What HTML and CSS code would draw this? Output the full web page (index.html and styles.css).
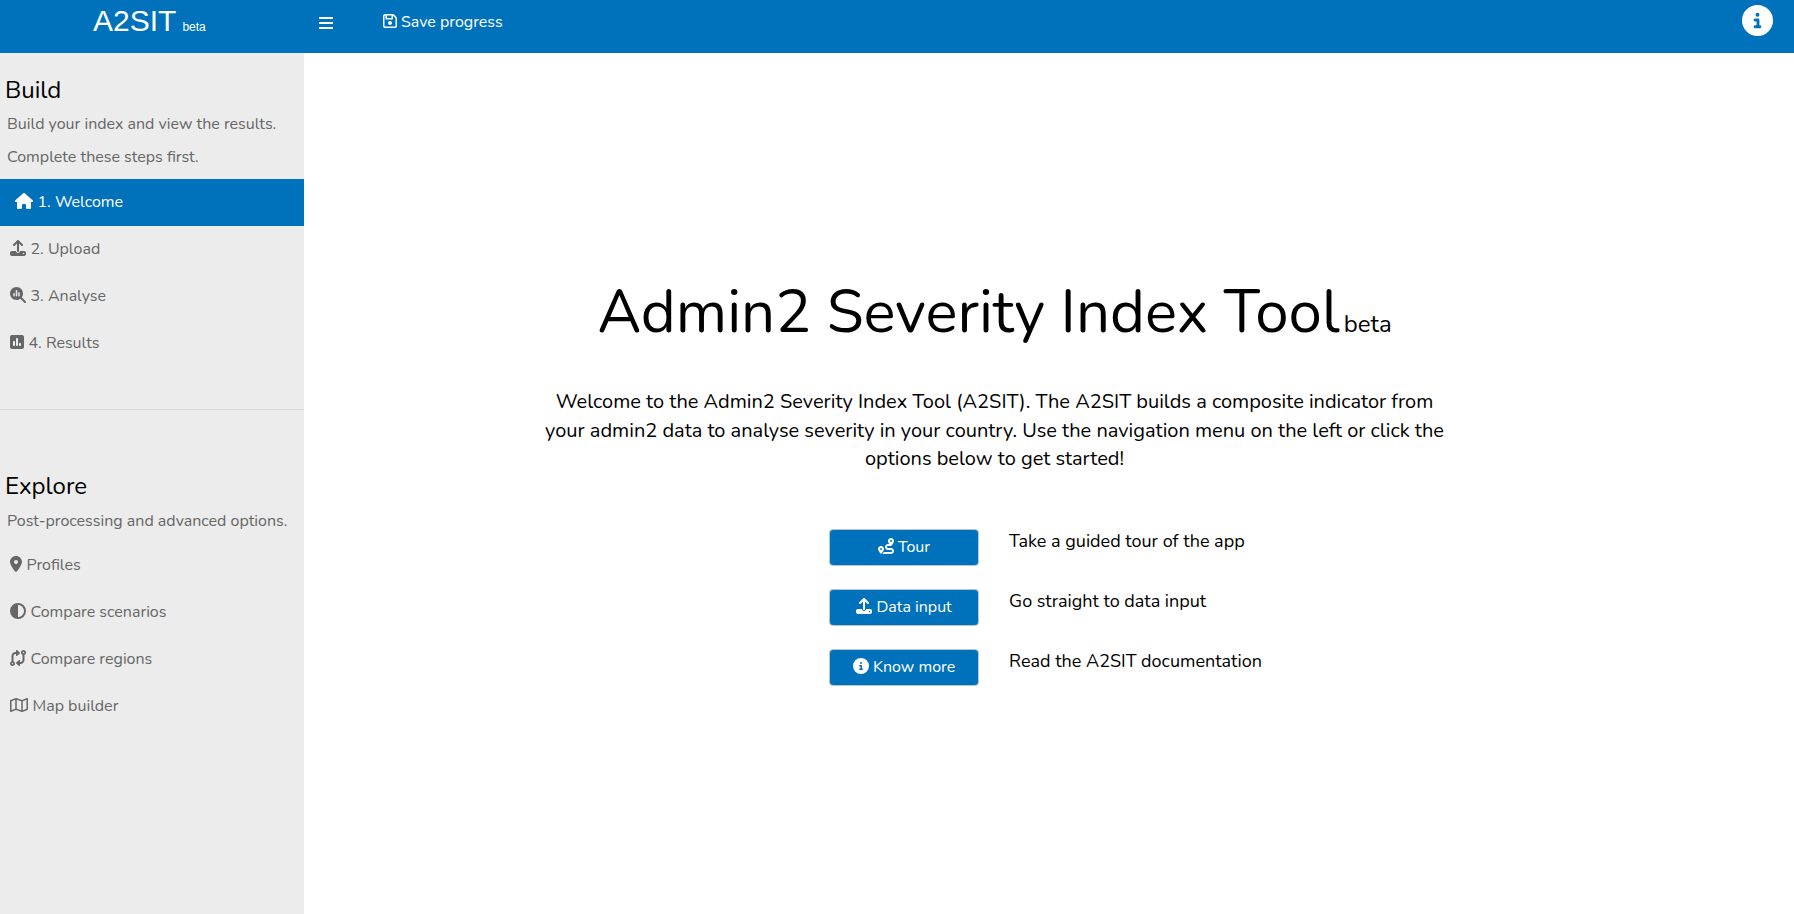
FILE: index.html
```html
<!DOCTYPE html>
<html lang="en">
<head>
<meta charset="utf-8">
<title>A2SIT</title>
<link rel="stylesheet" href="styles.css">
</head>
<body>
<header class="topbar">
  <div class="logo"><span class="logo-name">A2SIT</span><span class="logo-beta">beta</span></div>
  <svg class="bars" viewBox="0 0 14 12"><path d="M0 0h14v2H0zM0 5h14v2H0zM0 10h14v2H0z"/></svg>
  <div class="save"><svg class="icon w14" viewBox="0 0 448 512"><path fill-rule="evenodd" d="M48 96V416c0 8.800 7.200 16 16 16H384c8.800 0 16-7.200 16-16V170.500c0-4.200-1.700-8.300-4.700-11.300l33.900-33.900c12 12 18.700 28.300 18.700 45.300V416c0 35.300-28.700 64-64 64H64c-35.300 0-64-28.700-64-64V96C0 60.700 28.700 32 64 32H309.500c17 0 33.300 6.700 45.300 18.700l74.500 74.500-33.900 33.900L320.800 84.700c-.3-.3-.5-.5-.8-.8V184c0 13.300-10.700 24-24 24H104c-13.300 0-24-10.700-24-24V80H64c-8.800 0-16 7.200-16 16zm80-16v80H272V80H128zm32 240a64 64 0 1 1 128 0 64 64 0 1 1 -128 0z"/></svg><span class="save-text">Save progress</span></div>
  <svg class="help" viewBox="0 0 512 512"><use href="#info"/></svg>
</header>
<div class="body">
<nav class="sidebar">
  <h2 class="group">Build</h2>
  <p class="note">Build your index and view the results.</p>
  <p class="note">Complete these steps first.</p>
  <ul class="menu">
    <li class="item active"><svg class="icon w18" viewBox="0 0 576 512"><path d="M575.800 255.500c0 18-15 32.100-32 32.100h-32l.7 160.200c0 2.700-.2 5.400-.5 8.100V472c0 22.100-17.900 40-40 40H392c-22.100 0-40-17.900-40-40V384c0-17.700-14.300-32-32-32H256c-17.700 0-32 14.300-32 32v88c0 22.100-17.900 40-40 40H104c-22.100 0-40-17.900-40-40V287.600H32c-18 0-32-14-32-32.100c0-9 3-17 10-24L266.400 8c7-7 15-8 22-8s15 2 21 7L564.800 231.500c8 7 12 15 11 24z"/></svg><span>1. Welcome</span></li>
    <li class="item"><svg class="icon w16" viewBox="0 0 512 512"><use href="#upload"/></svg><span>2. Upload</span></li>
    <li class="item"><svg class="icon w16" viewBox="0 0 512 512"><path d="M416 208c0 45.900-14.900 88.300-40 122.700L502.600 457.400c12.500 12.500 12.500 32.800 0 45.300s-32.800 12.500-45.300 0L330.700 376c-34.400 25.200-76.800 40-122.700 40C93.100 416 0 322.900 0 208S93.100 0 208 0S416 93.100 416 208zm-312 8v64c0 13.300 10.700 24 24 24s24-10.700 24-24V216c0-13.300-10.700-24-24-24s-24 10.700-24 24zm80-96V280c0 13.300 10.700 24 24 24s24-10.700 24-24V120c0-13.300-10.700-24-24-24s-24 10.700-24 24zm80 64v96c0 13.300 10.700 24 24 24s24-10.700 24-24V184c0-13.300-10.700-24-24-24s-24 10.700-24 24z"/></svg><span>3. Analyse</span></li>
    <li class="item"><svg class="icon w14" viewBox="0 0 448 512"><path fill-rule="evenodd" d="M64 32C28.700 32 0 60.700 0 96V416c0 35.300 28.700 64 64 64H384c35.300 0 64-28.700 64-64V96c0-35.300-28.700-64-64-64H64zM128 224c17.700 0 32 14.300 32 32V352c0 17.700-14.300 32-32 32s-32-14.300-32-32V256c0-17.700 14.300-32 32-32zm64-64c0-17.700 14.300-32 32-32s32 14.300 32 32V352c0 17.700-14.300 32-32 32s-32-14.300-32-32V160zM320 288c17.700 0 32 14.300 32 32v32c0 17.700-14.300 32-32 32s-32-14.300-32-32V320c0-17.700 14.300-32 32-32z"/></svg><span>4. Results</span></li>
  </ul>
  <hr class="rule">
  <h2 class="group">Explore</h2>
  <p class="note note-post">Post-processing and advanced options.</p>
  <ul class="menu">
    <li class="item"><svg class="icon w12" viewBox="0 0 384 512"><path fill-rule="evenodd" d="M215.700 499.200C267 435 384 279.400 384 192C384 86 298 0 192 0S0 86 0 192c0 87.400 117 243 168.300 307.200c12.300 15.300 35.100 15.300 47.400 0zM192 128a64 64 0 1 1 0 128 64 64 0 1 1 0-128z"/></svg><span>Profiles</span></li>
    <li class="item"><svg class="icon w16" viewBox="0 0 512 512"><path fill-rule="evenodd" d="M448 256c0-106-86-192-192-192V448c106 0 192-86 192-192zM0 256a256 256 0 1 1 512 0A256 256 0 1 1 0 256z"/></svg><span>Compare scenarios</span></li>
    <li class="item"><svg class="icon w16" viewBox="0 0 512 512"><path fill-rule="evenodd" d="M320 488c0 9.500-5.600 18.100-14.200 21.900s-18.800 2.300-25.800-4.100l-80-72c-5.100-4.600-7.900-11-7.900-17.800s2.900-13.300 7.900-17.800l80-72c7-6.300 17.200-7.900 25.800-4.100s14.200 12.400 14.200 21.900v40h16c35.300 0 64-28.700 64-64V153.300C371.700 141 352 112.800 352 80c0-44.200 35.800-80 80-80s80 35.800 80 80c0 32.800-19.700 61-48 73.300V320c0 70.700-57.300 128-128 128H320v40zM456 80a24 24 0 1 0 -48 0 24 24 0 1 0 48 0zM192 24c0-9.500 5.600-18.100 14.200-21.900s18.800-2.300 25.800 4.100l80 72c5.100 4.600 7.900 11 7.900 17.800s-2.900 13.300-7.900 17.800l-80 72c-7 6.300-17.200 7.900-25.800 4.100s-14.200-12.400-14.200-21.900V128H176c-35.300 0-64 28.700-64 64V358.700c28.300 12.300 48 40.500 48 73.300c0 44.200-35.800 80-80 80s-80-35.800-80-80c0-32.800 19.700-61 48-73.300V192c0-70.700 57.300-128 128-128h16V24zM56 432a24 24 0 1 0 48 0 24 24 0 1 0 -48 0z"/></svg><span>Compare regions</span></li>
    <li class="item"><svg class="icon w18" viewBox="0 0 576 512"><path fill-rule="evenodd" d="M565.600 36.200C572.100 40.700 576 48.100 576 56V392c0 10-6.200 18.900-15.500 22.400l-168 64c-5.200 2-10.900 2.100-16.100 .3L192.500 417.500l-160 61c-7.400 2.800-15.700 1.800-22.200-2.700S0 463.900 0 456V120c0-10 6.100-18.900 15.500-22.400l168-64c5.200-2 10.900-2.100 16.100-.3L383.500 94.500l160-61c7.400-2.800 15.700-1.800 22.200 2.700zM48 136.500V421.200l120-45.700V90.800L48 136.500zM360 422.700V137.300l-144-48V374.700l144 48zm48-1.500l120-45.700V90.800L408 136.500V421.200z"/></svg><span>Map builder</span></li>
  </ul>
</nav>
<main class="main">
  <h1 class="title"><span class="title-name">Admin2 Severity Index Tool</span><span class="title-beta">beta</span></h1>
  <p class="intro"><span>Welcome to the Admin2 Severity Index Tool (A2SIT). The A2SIT builds a composite indicator from</span> <span>your admin2 data to analyse severity in your country. Use the navigation menu on the left or click the</span> <span>options below to get started!</span></p>
  <div class="actions">
    <button class="btn"><svg class="icon w16" viewBox="0 0 512 512"><path fill-rule="evenodd" d="M512 96c0 50.200-59.100 125.100-84.600 155c-3.800 4.400-9.400 6.100-14.500 5H320c-17.700 0-32 14.300-32 32s14.300 32 32 32h96c53 0 96 43 96 96s-43 96-96 96H139.600c8.700-9.900 19.300-22.600 30-36.800c6.300-8.400 12.800-17.600 19-27.200H416c17.700 0 32-14.300 32-32s-14.300-32-32-32H320c-53 0-96-43-96-96s43-96 96-96h39.800c-21-31.500-39.800-67.700-39.800-96c0-53 43-96 96-96s96 43 96 96zM117.100 489.100c-3.800 4.300-7.200 8.100-10.100 11.300l-1.800 2-.2-.2c-6 4.600-14.600 4-20-1.800C59.800 473 0 402.500 0 352c0-53 43-96 96-96s96 43 96 96c0 30-21.100 67-43.500 97.900c-10.700 14.700-21.700 28-30.800 38.500l-.6 .7zM128 352a32 32 0 1 0 -64 0 32 32 0 1 0 64 0zM416 128a32 32 0 1 0 0-64 32 32 0 1 0 0 64z"/></svg><span>Tour</span></button><span class="desc">Take a guided tour of the app</span>
    <button class="btn"><svg class="icon w16" viewBox="0 0 512 512"><path id="upload" fill-rule="evenodd" d="M288 109.300V352c0 17.700-14.300 32-32 32s-32-14.300-32-32V109.300l-73.400 73.400c-12.500 12.500-32.800 12.500-45.300 0s-12.500-32.800 0-45.300l128-128c12.500-12.500 32.800-12.500 45.300 0l128 128c12.500 12.500 12.500 32.800 0 45.300s-32.800 12.500-45.300 0L288 109.300zM64 352H192c0 35.300 28.700 64 64 64s64-28.700 64-64H448c35.300 0 64 28.700 64 64v32c0 35.300-28.700 64-64 64H64c-35.300 0-64-28.700-64-64V416c0-35.300 28.700-64 64-64zM432 456a24 24 0 1 0 0-48 24 24 0 1 0 0 48z"/></svg><span>Data input</span></button><span class="desc">Go straight to data input</span>
    <button class="btn"><svg class="icon w16" viewBox="0 0 512 512"><path id="info" fill-rule="evenodd" d="M256 512A256 256 0 1 0 256 0a256 256 0 1 0 0 512zM216 336h24V272H216c-13.300 0-24-10.700-24-24s10.700-24 24-24h48c13.300 0 24 10.700 24 24v88h8c13.300 0 24 10.700 24 24s-10.700 24-24 24H216c-13.300 0-24-10.700-24-24s10.700-24 24-24zm40-208a32 32 0 1 1 0 64 32 32 0 1 1 0-64z"/></svg><span>Know more</span></button><span class="desc">Read the A2SIT documentation</span>
  </div>
</main>
</div>
</body>
</html>
```
FILE: styles.css
```css
* { box-sizing: border-box; }
body { margin: 0; height: 914px; overflow: hidden; background: #fff; color: #000; font: 16px/24px Nunito, Lato, sans-serif; display: flex; flex-direction: column; }
h1, h2, p, ul { margin: 0; padding: 0; font-weight: 400; }
span { white-space: nowrap; }
svg { display: block; fill: currentColor; flex: none; }
.icon { height: 16px; }
.w12 { width: 12px; } .w14 { width: 14px; } .w16 { width: 16px; } .w18 { width: 18px; }

.topbar { height: 53px; flex: none; display: flex; align-items: flex-start; background: #0072bc; color: #fff; padding-right: 21px; }
.logo { width: 304px; padding: 4px 0 0 93px; display: flex; align-items: baseline; font-family: "Liberation Sans", sans-serif; }
.logo-name { font-size: 30px; line-height: 34px; }
.logo-beta { font-size: 12px; margin-left: 6px; }
.bars { width: 14px; height: 12px; margin: 17px 0 0 15px; }
.save { display: flex; align-items: center; gap: 4px; margin: 10px auto 0 50px; height: 24px; }
.save .icon { margin-bottom: 2px; }
.help { width: 31px; height: 31px; margin-top: 5px; }

.body { flex: 1; display: flex; }
.sidebar { width: 304px; background: #ececec; color: #666; padding-top: 22px; }
.group { font-size: 24px; line-height: 30px; color: #000; padding-left: 5px; margin-bottom: 3px; }
.note { padding-left: 7px; height: 33px; line-height: 33px; }
.note-post { line-height: 35px; }
.menu { list-style: none; padding-top: 5px; }
.item { height: 47px; display: flex; align-items: center; gap: 4.500px; padding: 0 0 2px 10px; }
.item .icon { margin-bottom: 1px; }
.active { background: #0072bc; color: #fff; padding-left: 15px; }
.rule { margin: 42px 0 61px; border: 0; border-top: 1px solid #d8d8d8; }

.main { flex: 1; display: flex; flex-direction: column; align-items: center; padding-top: 223px; padding-right: 109px; }
.title { display: flex; align-items: baseline; line-height: 72px; }
.title-name { font-size: 60px; }
.title-beta { font-size: 24px; margin-left: 4px; }
.intro { width: 900px; margin-top: 28px; text-align: center; font-size: 20px; line-height: 28.570px; display: flex; flex-direction: column; align-items: center; }
.actions { display: grid; grid-template-columns: 150px auto; column-gap: 30px; row-gap: 23px; margin-top: 55px; margin-left: 102px; }
.btn { height: 37px; display: flex; align-items: center; justify-content: center; gap: 4px; padding: 0; border: 1px solid #b9c4cc; border-radius: 4px; background: #0072bc; color: #fff; font: inherit; }
.btn .icon { margin-bottom: 2px; }
.desc { font-size: 18px; line-height: 24px; }
```
